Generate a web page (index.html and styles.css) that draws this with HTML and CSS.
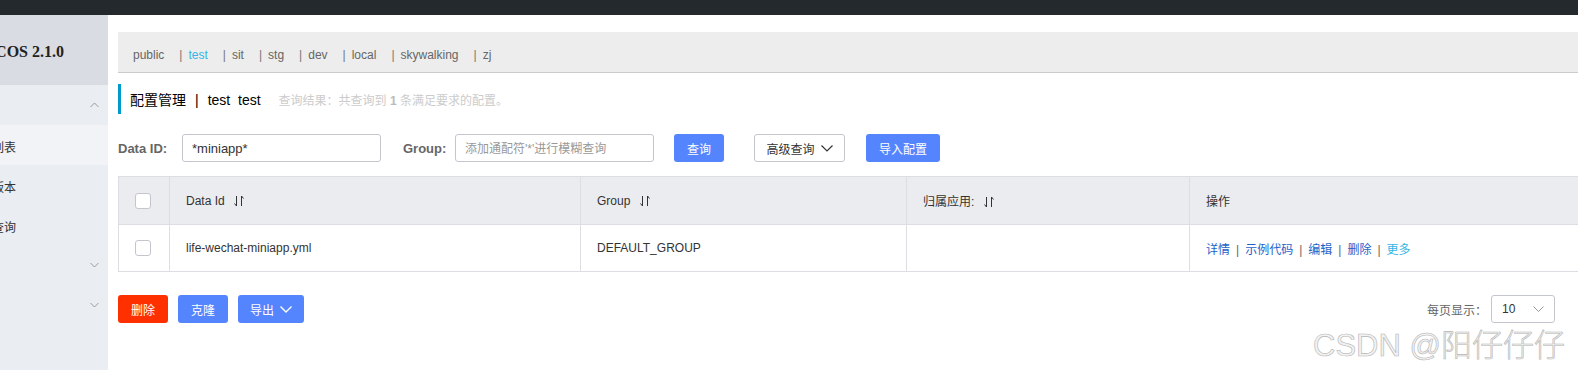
FILE: index.html
```html
<!DOCTYPE html>
<html lang="zh-CN">
<head>
   <meta charset="UTF-8">
   <title>配置管理</title>
   <link rel="stylesheet" href="styles.css">
</head>
<body>
   <div class="topbar"></div>
   <div class="layout">
       <div class="sidebar">
           <div class="brand"><span>NACOS 2.1.0</span></div>
           <div class="menu-group">
               <span class="menu-text">配置管理</span>
               <svg class="chev" width="9" height="6" viewBox="0 0 9 6"><polyline points="0.5,5 4.5,1 8.5,5" fill="none" stroke="#999" stroke-width="1"/></svg>
           </div>
           <div class="menu-item active"><span class="menu-text">配置列表</span></div>
           <div class="menu-item"><span class="menu-text">历史版本</span></div>
           <div class="menu-item"><span class="menu-text">监听查询</span></div>
           <div class="menu-group">
               <span class="menu-text">服务管理</span>
               <svg class="chev" width="9" height="6" viewBox="0 0 9 6"><polyline points="0.5,1 4.5,5 8.5,1" fill="none" stroke="#999" stroke-width="1"/></svg>
           </div>
           <div class="menu-group">
               <span class="menu-text">权限控制</span>
               <svg class="chev" width="9" height="6" viewBox="0 0 9 6"><polyline points="0.5,1 4.5,5 8.5,1" fill="none" stroke="#999" stroke-width="1"/></svg>
           </div>
       </div>

       <div class="main">
           <div class="ns-bar">
               <span class="ns-name">public</span>
               <span class="ns-sep">|</span><span class="ns-name current">test</span>
               <span class="ns-sep">|</span><span class="ns-name">sit</span>
               <span class="ns-sep">|</span><span class="ns-name">stg</span>
               <span class="ns-sep">|</span><span class="ns-name">dev</span>
               <span class="ns-sep">|</span><span class="ns-name">local</span>
               <span class="ns-sep">|</span><span class="ns-name">skywalking</span>
               <span class="ns-sep">|</span><span class="ns-name">zj</span>
           </div>

           <div class="page-title">
               <span class="title-text">配置管理<span class="title-sep">|</span>test&nbsp;&nbsp;test</span>
               <span class="title-result">查询结果：共查询到 <b>1</b> 条满足要求的配置。</span>
           </div>

           <div class="search-row">
               <label class="search-label">Data ID:</label>
               <div class="input-box"><input type="text" value="*miniapp*"></div>
               <label class="search-label group-label">Group:</label>
               <div class="input-box"><input type="text" placeholder="添加通配符'*'进行模糊查询"></div>
               <button type="button" class="btn btn-primary btn-query">查询</button>
               <button type="button" class="btn btn-normal btn-advanced">高级查询
                   <svg width="12" height="7" viewBox="0 0 12 7"><polyline points="0.5,0.5 6,6 11.5,0.5" fill="none" stroke="#333" stroke-width="1.2"/></svg>
               </button>
               <button type="button" class="btn btn-primary btn-import">导入配置</button>
           </div>

           <table class="config-table">
               <thead>
                   <tr>
                       <th class="col-check"><span class="checkbox"></span></th>
                       <th class="col-id">Data Id
                           <svg class="sort" width="10" height="12" viewBox="0 0 10 12"><path d="M2.5 1v10M2.5 11L0.5 8.5M7.5 1v10M7.5 1l2 2.5" fill="none" stroke="#333" stroke-width="1"/></svg>
                       </th>
                       <th class="col-group">Group
                           <svg class="sort" width="10" height="12" viewBox="0 0 10 12"><path d="M2.5 1v10M2.5 11L0.5 8.5M7.5 1v10M7.5 1l2 2.5" fill="none" stroke="#333" stroke-width="1"/></svg>
                       </th>
                       <th class="col-app">归属应用:
                           <svg class="sort" width="10" height="12" viewBox="0 0 10 12"><path d="M2.5 1v10M2.5 11L0.5 8.5M7.5 1v10M7.5 1l2 2.5" fill="none" stroke="#333" stroke-width="1"/></svg>
                       </th>
                       <th class="col-op">操作</th>
                   </tr>
               </thead>
               <tbody>
                   <tr>
                       <td class="col-check"><span class="checkbox"></span></td>
                       <td>life-wechat-miniapp.yml</td>
                       <td>DEFAULT_GROUP</td>
                       <td></td>
                       <td class="ops">
                           <a>详情</a><span class="op-sep">|</span><a>示例代码</a><span class="op-sep">|</span><a>编辑</a><span class="op-sep">|</span><a>删除</a><span class="op-sep">|</span><a class="more">更多</a>
                       </td>
                   </tr>
               </tbody>
           </table>

           <div class="bottom-row">
               <div class="bulk">
                   <button type="button" class="btn btn-danger btn-small">删除</button>
                   <button type="button" class="btn btn-primary btn-small">克隆</button>
                   <button type="button" class="btn btn-primary btn-export">导出
                       <svg width="12" height="7" viewBox="0 0 12 7"><polyline points="0.5,0.5 6,6 11.5,0.5" fill="none" stroke="#fff" stroke-width="1.4"/></svg>
                   </button>
               </div>
               <div class="pager">
                   <span class="pager-label">每页显示：</span>
                   <div class="page-size">
                       <span>10</span>
                       <svg width="11" height="6" viewBox="0 0 11 6"><polyline points="0.5,0.5 5.5,5.5 10.5,0.5" fill="none" stroke="#999" stroke-width="1"/></svg>
                   </div>
               </div>
           </div>
       </div>
   </div>
   <div class="watermark">CSDN @阳仔仔仔</div>
</body>
</html>
```

FILE: styles.css
```css
* { margin: 0; padding: 0; box-sizing: border-box; }
html, body {
    width: 100%; height: 100%; overflow: hidden;
    background: #fff;
    font-family: 'Liberation Sans', 'Noto Sans CJK SC', sans-serif;
    font-size: 12px; color: #333;
}
.topbar { height: 15px; background: #24292e; }
.layout { display: flex; height: 355px; }

/* sidebar (scrolled a little to the left, text is cut) */
.sidebar { width: 108px; flex: none; background: #eaedf1; overflow: hidden; }
.brand {
    height: 70px; background: #d9dde3;
    display: flex; align-items: center;
    padding-top: 4px;
    font-family: 'Liberation Serif', serif;
    font-weight: 700; font-size: 16px; color: #222;
}
.brand span { margin-left: -28px; white-space: nowrap; }
.menu-group, .menu-item {
    height: 40px; display: flex; align-items: center;
    position: relative; white-space: nowrap;
}
.menu-item { padding-top: 3px; }
.menu-text { margin-left: -32px; font-size: 12px; color: #333; }
.menu-group .menu-text { visibility: hidden; }
.menu-item.active { background: #f2f3f7; }
.chev { position: absolute; left: 90px; top: 17px; }

/* main */
.main { width: 1640px; flex: none; padding: 17px 0 0 10px; }
.ns-bar {
    height: 41px; background: #ededed;
    border-bottom: 1px solid #ccc;
    display: flex; align-items: center;
    padding: 5px 0 0 15px;
    color: #666;
}
.ns-name { margin-right: 15px; }
.ns-name.current { color: #33b5e5; }
.ns-sep { margin-right: 6px; color: #777; }

.page-title {
    margin-top: 11px; height: 30px;
    border-left: 3px solid #0099cc;
    display: flex; align-items: center;
    padding-left: 9px;
}
.title-text { font-size: 14px; color: #000; }
.title-sep { margin: 0 9px; }
.title-result { margin-left: 18px; color: #ccc; }
.title-result b { color: #bbb; }

.search-row {
    margin-top: 20px; height: 28px;
    display: flex; align-items: center;
}
.search-label { font-size: 13px; font-weight: 700; color: #666; width: 64px; }
.group-label { width: 52px; margin-left: 22px; }
.input-box {
    width: 199px; height: 28px;
    border: 1px solid #c4c6cf; border-radius: 3px;
    display: flex; align-items: center;
}
.input-box input {
    width: 100%; border: none; outline: none; background: transparent;
    padding: 0 9px;
    font-family: 'Liberation Sans', 'Noto Sans CJK SC', sans-serif;
    font-size: 13px; color: #333;
}
.input-box input::placeholder { color: #999; font-size: 12px; }

.btn {
    height: 28px; border-radius: 3px; border: none;
    font-family: 'Liberation Sans', 'Noto Sans CJK SC', sans-serif;
    font-size: 12px; cursor: pointer;
    display: inline-flex; align-items: center; justify-content: center; gap: 6px;
}
.btn-primary { background: #5584ff; color: #fff; }
.btn-danger { background: #ff3000; color: #fff; }
.btn-normal { background: #fff; color: #333; border: 1px solid #c4c6cf; }
.btn-query { width: 50px; margin-left: 20px; }
.btn-advanced { width: 91px; margin-left: 30px; }
.btn-import { width: 74px; margin-left: 21px; }

.config-table {
    margin-top: 14px; width: 100%;
    border-collapse: collapse;
    border: 1px solid #dcdee3;
}
.config-table th, .config-table td {
    border: 1px solid #dcdee3;
    text-align: left; padding: 0 16px;
    font-weight: 400; color: #333;
}
.config-table th { height: 48px; background: #ebecf0; }
.config-table td { height: 47px; }
.col-check { width: 51px; }
.config-table .col-check { padding: 0 0 0 16px; }
.col-id { width: 411px; }
.col-group { width: 326px; }
.col-app { width: 283px; }
.sort { margin-left: 6px; vertical-align: -2px; }
.checkbox {
    display: block; width: 16px; height: 16px;
    border: 1px solid #c4c6cf; border-radius: 3px; background: #fff;
}
.ops a { color: #1e62c9; }
.ops a.more { color: #33b5e5; }
.op-sep { color: #666; margin: 0 6px; }

.bottom-row {
    margin-top: 23px; width: 1437px;
    display: flex; justify-content: space-between; align-items: center;
}
.bulk { display: flex; gap: 10px; }
.btn-small { width: 50px; }
.btn-export { width: 66px; }
.pager { display: flex; align-items: center; }
.pager-label { color: #666; margin-right: 4px; }
.page-size {
    width: 64px; height: 28px;
    border: 1px solid #c4c6cf; border-radius: 3px;
    display: flex; align-items: center; justify-content: space-between;
    padding: 0 10px 0 10px; color: #333;
}

.watermark {
    position: absolute; left: 1313px; top: 320px;
    font-family: 'Liberation Sans', 'Noto Sans CJK SC', sans-serif;
    font-size: 31px; font-weight: 300;
    color: #f2f2f2; -webkit-text-stroke: 0.6px #b5b5b5;
    white-space: nowrap;
}
```
